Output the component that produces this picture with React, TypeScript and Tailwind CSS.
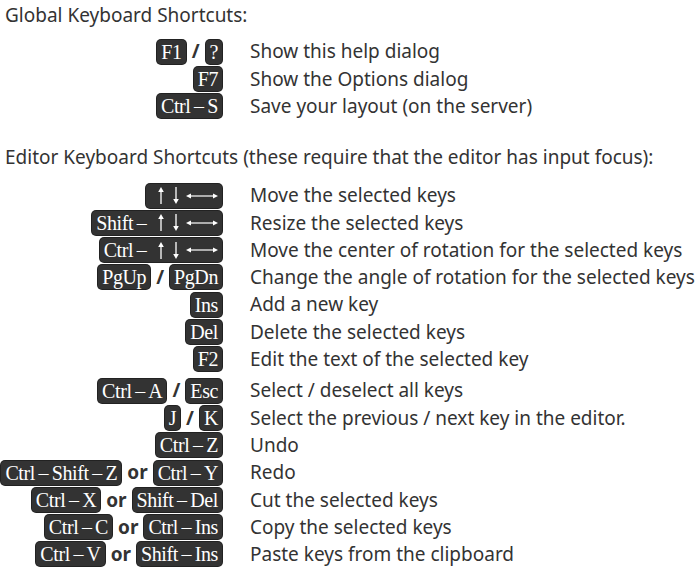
import * as React from "react";

type Row = { keys: React.ReactNode; desc: string; gapTop?: boolean };

function Key({ children }: { children: React.ReactNode }) {
  return (
    <kbd className="inline-flex items-center rounded-[4px] bg-[#333333] px-[4px] h-[24px] text-[20px] leading-none text-white font-['Liberation_Serif',serif] tracking-[-0.4px] shadow-[0_0_0_1px_#222] whitespace-pre">
      {children}
    </kbd>
  );
}

function Sep({ children }: { children: React.ReactNode }) {
  return <span className="mx-[6px] font-bold text-[#333]">{children}</span>;
}

// drawn arrows: up, down, long left-right
function Arrows() {
  return (
    <span className="inline-flex items-center gap-[9px] pl-[8px]">
      <svg width="6" height="17" viewBox="0 0 6 17">
        <line x1="3" y1="4" x2="3" y2="17" stroke="white" strokeWidth="1.3" />
        <path d="M3 0 L5.8 5 L0.2 5 Z" fill="white" />
      </svg>
      <svg width="6" height="17" viewBox="0 0 6 17">
        <line x1="3" y1="0" x2="3" y2="13" stroke="white" strokeWidth="1.3" />
        <path d="M3 17 L5.8 12 L0.2 12 Z" fill="white" />
      </svg>
      <svg width="32" height="10" viewBox="0 0 32 10" className="-ml-[2px]">
        <line x1="3" y1="5" x2="29" y2="5" stroke="white" strokeWidth="1.2" />
        <path d="M0 5 L5 2.5 L5 7.5 Z" fill="white" />
        <path d="M32 5 L27 2.5 L27 7.5 Z" fill="white" />
      </svg>
    </span>
  );
}

const D = "\u2009\u2013\u2009";

const globalRows: Row[] = [
  {
    keys: (
      <>
        <Key>F1</Key>
        <Sep>/</Sep>
        <Key>?</Key>
      </>
    ),
    desc: "Show this help dialog",
  },
  { keys: <Key>F7</Key>, desc: "Show the Options dialog" },
  { keys: <Key>{`Ctrl${D}S`}</Key>, desc: "Save your layout (on the server)" },
];

const editorRows: Row[] = [
  { keys: <Key><Arrows /></Key>, desc: "Move the selected keys" },
  { keys: <Key>{`Shift${D}`}<Arrows /></Key>, desc: "Resize the selected keys" },
  { keys: <Key>{`Ctrl${D}`}<Arrows /></Key>, desc: "Move the center of rotation for the selected keys" },
  {
    keys: (
      <>
        <Key>PgUp</Key>
        <Sep>/</Sep>
        <Key>PgDn</Key>
      </>
    ),
    desc: "Change the angle of rotation for the selected keys",
  },
  { keys: <Key>Ins</Key>, desc: "Add a new key" },
  { keys: <Key>Del</Key>, desc: "Delete the selected keys" },
  { keys: <Key>F2</Key>, desc: "Edit the text of the selected key" },
  {
    keys: (
      <>
        <Key>{`Ctrl${D}A`}</Key>
        <Sep>/</Sep>
        <Key>Esc</Key>
      </>
    ),
    desc: "Select / deselect all keys",
    gapTop: true,
  },
  {
    keys: (
      <>
        <Key>J</Key>
        <Sep>/</Sep>
        <Key>K</Key>
      </>
    ),
    desc: "Select the previous / next key in the editor.",
  },
  { keys: <Key>{`Ctrl${D}Z`}</Key>, desc: "Undo" },
  {
    keys: (
      <>
        <Key>{`Ctrl${D}Shift${D}Z`}</Key>
        <Sep>or</Sep>
        <Key>{`Ctrl${D}Y`}</Key>
      </>
    ),
    desc: "Redo",
  },
  {
    keys: (
      <>
        <Key>{`Ctrl${D}X`}</Key>
        <Sep>or</Sep>
        <Key>{`Shift${D}Del`}</Key>
      </>
    ),
    desc: "Cut the selected keys",
  },
  {
    keys: (
      <>
        <Key>{`Ctrl${D}C`}</Key>
        <Sep>or</Sep>
        <Key>{`Ctrl${D}Ins`}</Key>
      </>
    ),
    desc: "Copy the selected keys",
  },
  {
    keys: (
      <>
        <Key>{`Ctrl${D}V`}</Key>
        <Sep>or</Sep>
        <Key>{`Shift${D}Ins`}</Key>
      </>
    ),
    desc: "Paste keys from the clipboard",
  },
];

function ShortcutTable({ rows }: { rows: Row[] }) {
  return (
    <div className="grid grid-cols-[217px_1fr] gap-x-[28px]">
      {rows.map((row, i) => (
        <React.Fragment key={i}>
          <div className={"flex h-[27.3px] items-center justify-end whitespace-nowrap" + (row.gapTop ? " mt-[4px]" : "")}>
            {row.keys}
          </div>
          <div className={"flex h-[27.3px] items-center whitespace-nowrap" + (row.gapTop ? " mt-[4px]" : "")}>
            {row.desc}
          </div>
        </React.Fragment>
      ))}
    </div>
  );
}

export default function App() {
  return (
    <div className="h-[572px] w-[700px] overflow-hidden bg-white pl-[5px] pt-[2px] font-['Noto_Sans',sans-serif] text-[19px] text-[#333333]">
      <p className="h-[27px] leading-[27px]">Global Keyboard Shortcuts:</p>
      <div className="mt-[9px]">
        <ShortcutTable rows={globalRows} />
      </div>
      <p className="mt-[24px] h-[27px] leading-[27px]">
        Editor Keyboard Shortcuts (these require that the editor has input focus):
      </p>
      <div className="mt-[11px]">
        <ShortcutTable rows={editorRows} />
      </div>
    </div>
  );
}
